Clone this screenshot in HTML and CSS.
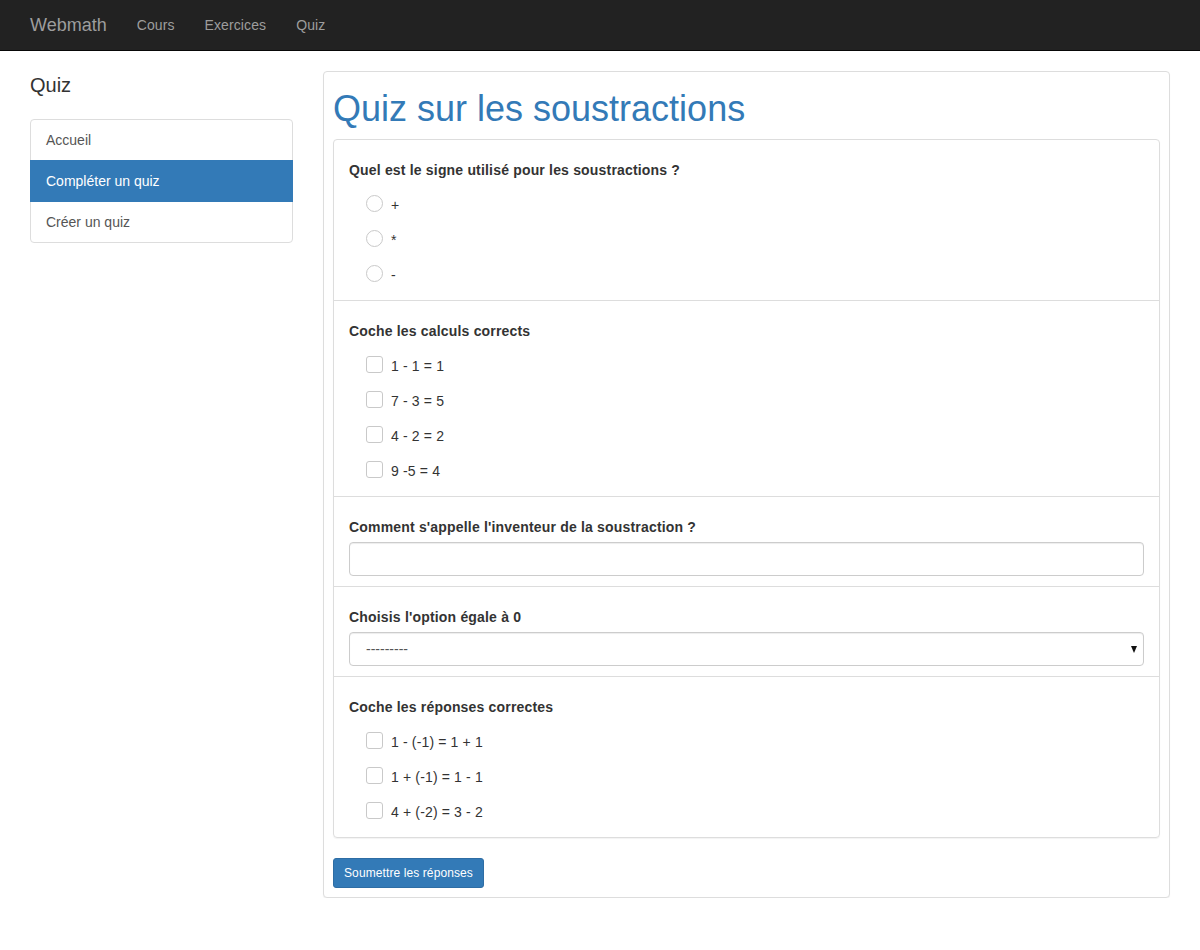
FILE: index.html
```html
<!DOCTYPE html>
<html lang="fr">
<head>
<meta charset="utf-8">
<title>Webmath - Quiz</title>
<link rel="stylesheet" href="styles.css">
</head>
<body>
<nav class="navbar">
  <a class="brand" href="#">Webmath</a>
  <a class="nav-link" href="#">Cours</a>
  <a class="nav-link" href="#">Exercices</a>
  <a class="nav-link" href="#">Quiz</a>
</nav>
<div class="page">
  <aside class="sidebar">
    <h3 class="side-title">Quiz</h3>
    <div class="list-group">
      <a class="list-item" href="#">Accueil</a>
      <a class="list-item active" href="#">Compléter un quiz</a>
      <a class="list-item" href="#">Créer un quiz</a>
    </div>
  </aside>
  <main class="main-panel">
    <h1 class="quiz-title">Quiz sur les soustractions</h1>
    <form class="quiz-form">
      <div class="questions">
        <div class="question">
          <div class="q-label">Quel est le signe utilisé pour les soustractions ?</div>
          <div class="opts">
            <label class="opt"><input type="radio" name="q1"><span>+</span></label>
            <label class="opt"><input type="radio" name="q1"><span>*</span></label>
            <label class="opt"><input type="radio" name="q1"><span>-</span></label>
          </div>
        </div>
        <div class="question">
          <div class="q-label">Coche les calculs corrects</div>
          <div class="opts">
            <label class="opt"><input type="checkbox"><span>1 - 1 = 1</span></label>
            <label class="opt"><input type="checkbox"><span>7 - 3 = 5</span></label>
            <label class="opt"><input type="checkbox"><span>4 - 2 = 2</span></label>
            <label class="opt"><input type="checkbox"><span>9 -5 = 4</span></label>
          </div>
        </div>
        <div class="question">
          <div class="q-label">Comment s'appelle l'inventeur de la soustraction ?</div>
          <input class="form-control" type="text">
        </div>
        <div class="question">
          <div class="q-label">Choisis l'option égale à 0</div>
          <div class="select-wrap">
            <select class="form-control select">
              <option>---------</option>
            </select>
          </div>
        </div>
        <div class="question">
          <div class="q-label">Coche les réponses correctes</div>
          <div class="opts">
            <label class="opt"><input type="checkbox"><span>1 - (-1) = 1 + 1</span></label>
            <label class="opt"><input type="checkbox"><span>1 + (-1) = 1 - 1</span></label>
            <label class="opt"><input type="checkbox"><span>4 + (-2) = 3 - 2</span></label>
          </div>
        </div>
      </div>
      <button class="btn" type="button">Soumettre les réponses</button>
    </form>
  </main>
</div>
</body>
</html>
```
FILE: styles.css
```css
* { box-sizing: border-box; }
html, body {
  margin: 0;
  background: #fff;
  font-family: "Liberation Sans", Arial, Helvetica, sans-serif;
  font-size: 14px;
  line-height: 20px;
  color: #333;
}
a { text-decoration: none; }

.navbar {
  display: flex;
  align-items: flex-start;
  height: 51px;
  padding: 0 15px;
  background: #222;
  border-bottom: 1px solid #080808;
}
.brand {
  padding: 15px;
  font-size: 18px;
  line-height: 20px;
  color: #9d9d9d;
}
.nav-link {
  padding: 15px;
  font-size: 14px;
  line-height: 20px;
  color: #9d9d9d;
  letter-spacing: 0.1px;
}

.page {
  display: grid;
  grid-template-columns: 263px 1fr;
  column-gap: 30px;
  padding: 20px 30px 0;
  align-items: start;
}

.side-title {
  margin: 0 0 20px;
  font-size: 20px;
  font-weight: normal;
  line-height: 28px;
  color: #333;
}
.list-group {
  display: flex;
  flex-direction: column;
}
.list-item {
  display: block;
  padding: 10px 15px;
  margin-bottom: -1px;
  border: 1px solid #ddd;
  background: #fff;
  color: #555;
  line-height: 20px;
}
.list-item:first-child { border-radius: 4px 4px 0 0; }
.list-item:last-child { border-radius: 0 0 4px 4px; margin-bottom: 0; }
.list-item.active {
  background: #337ab7;
  border-color: #337ab7;
  color: #fff;
  position: relative;
}

.main-panel {
  border: 1px solid #ddd;
  border-radius: 4px;
  padding: 9px;
  background: #fff;
  box-shadow: 0 1px 1px rgba(0,0,0,.05);
}
.quiz-title {
  margin: 9px 0 11px;
  font-size: 36px;
  font-weight: normal;
  line-height: 38px;
  color: #337ab7;
}
.questions {
  border: 1px solid #ddd;
  border-radius: 4px;
  margin-bottom: 20px;
  box-shadow: 0 1px 1px rgba(0,0,0,.05);
}
.question {
  padding: 20px 15px 10px;
}
.question + .question {
  border-top: 1px solid #ddd;
}
.q-label {
  font-weight: bold;
  margin-bottom: 5px;
  letter-spacing: 0.18px;
}
.opts {
  padding-top: 1px;
  margin-bottom: -1px;
}
.opt {
  display: flex;
  align-items: center;
  height: 35px;
  padding-left: 17px;
}
.opt span {
  padding-top: 3px;
  letter-spacing: 0.15px;
}
.opt input {
  -webkit-appearance: none;
  appearance: none;
  width: 17px;
  height: 17px;
  margin: 0 8px 0 0;
  border: 1px solid #c9c9c9;
  background: #fff;
  flex: none;
}
.opt input[type="radio"] { border-radius: 50%; }
.opt input[type="checkbox"] { border-radius: 3px; }

.form-control {
  display: block;
  width: 100%;
  height: 34px;
  padding: 6px 12px;
  font-family: inherit;
  font-size: 14px;
  line-height: 20px;
  color: #555;
  background: #fff;
  border: 1px solid #ccc;
  border-radius: 4px;
  box-shadow: inset 0 1px 1px rgba(0,0,0,.075);
  margin: 0;
}
.select-wrap {
  position: relative;
}
.select {
  -webkit-appearance: none;
  appearance: none;
  padding-left: 16px;
  color: #555;
}
.select-wrap::after {
  content: "";
  position: absolute;
  right: 7px;
  top: 14px;
  width: 0;
  height: 0;
  border-left: 3.5px solid transparent;
  border-right: 3.5px solid transparent;
  border-top: 7px solid #111;
  pointer-events: none;
}

.btn {
  display: inline-block;
  padding: 5px 10px;
  font-family: inherit;
  font-size: 12px;
  line-height: 18px;
  color: #fff;
  background: #337ab7;
  border: 1px solid #2e6da4;
  border-radius: 3px;
  letter-spacing: 0.1px;
  cursor: pointer;
}
```
